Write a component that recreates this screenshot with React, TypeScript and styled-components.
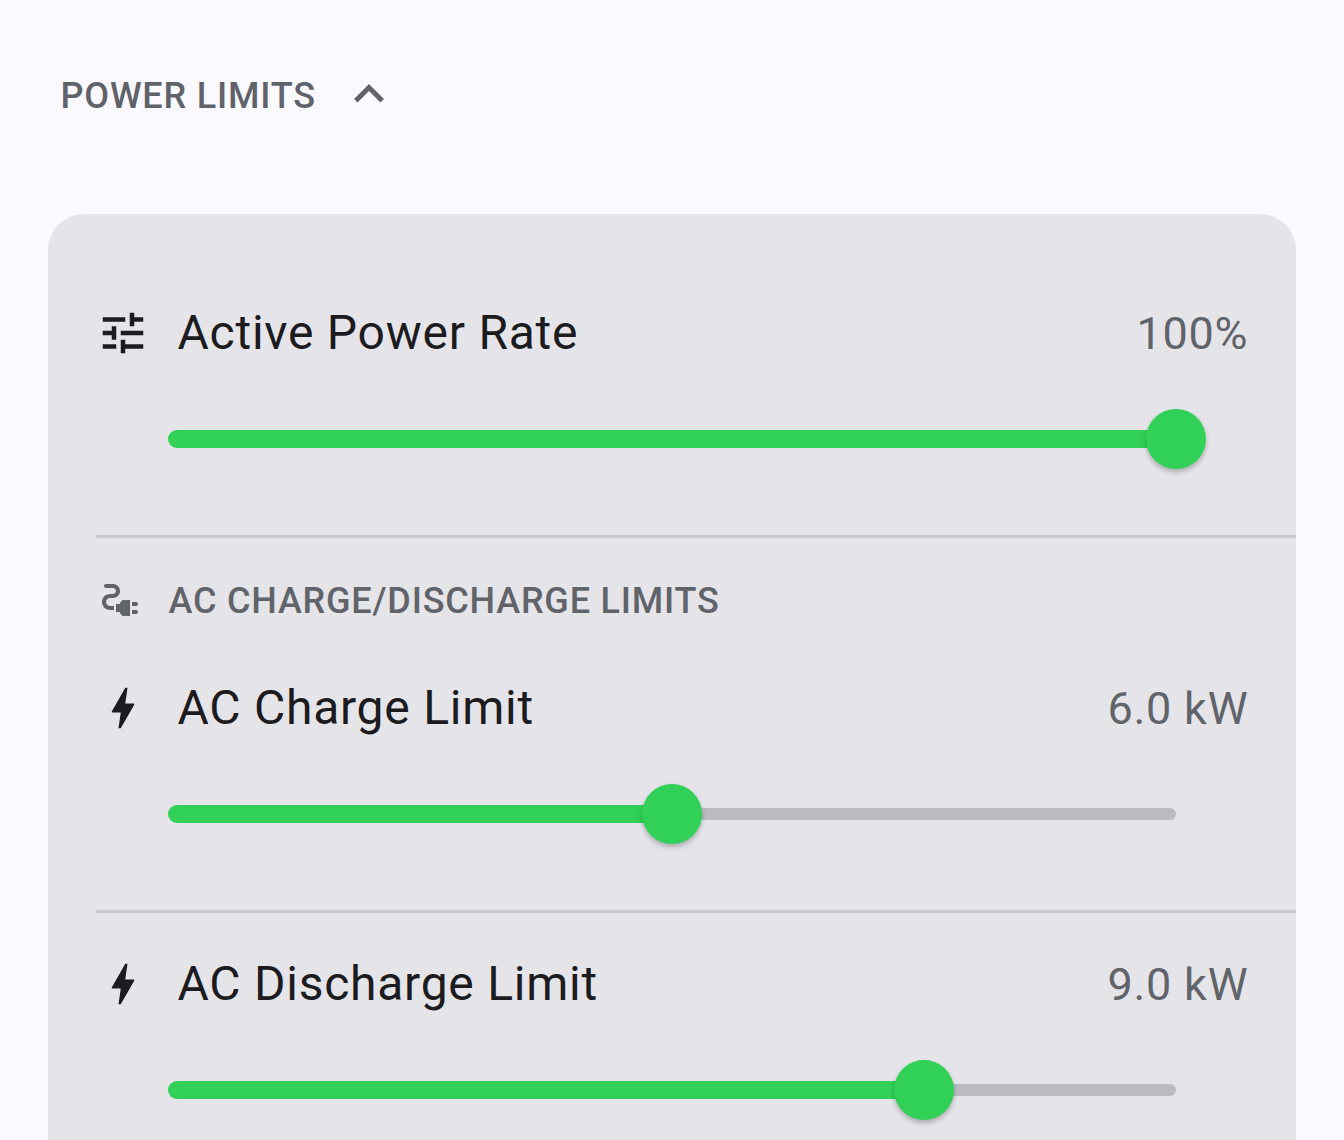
import type { ReactNode } from "react";
import styled, { createGlobalStyle } from "styled-components";

const GlobalStyle = createGlobalStyle`
  * {
    box-sizing: border-box;
  }
  html,
  body {
    margin: 0;
    height: 1140px;
    overflow: hidden;
    background: #faf9ff;
    font-family: Roboto, sans-serif;
  }
`;

const Page = styled.main`
  height: 1140px;
  overflow: hidden;
  padding: 0 48px;
`;

/**
 * collapsible section title
 */
const SectionHeader = styled.header`
  height: 214px;
  padding: 64px 0 0 12.5px;
  display: flex;
  align-items: flex-start;
`;

const SectionTitle = styled.h2`
  margin: 0;
  padding-top: 8px;
  width: 278.5px;
  font-size: 36px;
  line-height: 48px;
  font-weight: 500;
  letter-spacing: 0.8px;
  color: #61636a;
  white-space: nowrap;
`;

const Card = styled.section`
  height: 1000px;
  padding-top: 71px;
  border-radius: 36px 36px 0 0;
  background: #e5e4e9;
`;

const Setting = styled.div<{ $spaced?: boolean }>`
  margin-left: 48px;
  padding-top: ${(p) => (p.$spaced ? 23 : 0)}px;
  padding-bottom: 66px;
  border-bottom: 3px solid #c8c8ce;
`;

const SettingRow = styled.div`
  display: flex;
  align-items: center;
  height: 96px;
  padding-right: 47.700px;
`;

const IconBox = styled.div`
  width: 81.5px;
  svg {
    display: block;
  }
`;

const Label = styled.span`
  flex: 1;
  font-size: 48px;
  line-height: 72px;
  letter-spacing: 0.75px;
  color: #1b1b20;
  white-space: nowrap;
`;

const Value = styled.span`
  padding-top: 1px;
  font-size: 45px;
  line-height: 60px;
  letter-spacing: 0.75px;
  color: #61636a;
  white-space: nowrap;
`;

const Slider = styled.div`
  display: flex;
  align-items: center;
  width: 1038px;
  height: 60px;
  margin: 28px 0 0 72px;
`;

const Filled = styled.div`
  height: 18px;
  border-radius: 9px 0 0 9px;
  background: #31d158;
`;

const Thumb = styled.div`
  flex: none;
  z-index: 1;
  width: 60px;
  height: 60px;
  margin: 0 -30px;
  border-radius: 50%;
  background: #31d158;
  box-shadow: 0 3px 5px rgba(0, 0, 0, 0.25);
`;

const Remaining = styled.div`
  height: 12px;
  border-radius: 0 6px 6px 0;
  background: #b9bbc1;
`;

const GroupTitle = styled.h3`
  display: flex;
  align-items: center;
  height: 122px;
  margin: 0 0 0 48px;
  padding-top: 4px;
  font-size: 36px;
  line-height: 48px;
  font-weight: 500;
  letter-spacing: 0.8px;
  color: #61636a;
  svg {
    display: block;
    margin: -2px 24.5px 0 0;
  }
`;

const ExpandLessIcon = () => (
  <svg width="60" height="60" viewBox="0 0 24 24" fill="#61636a">
    <path d="M12 8l-6 6 1.41 1.41L12 10.83l4.59 4.58L18 14z" />
  </svg>
);

const TuneIcon = () => (
  <svg width="54" height="54" viewBox="0 0 24 24" fill="#1b1b20">
    <path d="M3 17v2h6v-2H3zM3 5v2h10V5H3zm10 16v-2h8v-2h-8v-2h-2v6h2zM7 9v2H3v2h4v2h2V9H7zm14 4v-2H11v2h10zm-6-4h2V7h4V5h-4V3h-2v6z" />
  </svg>
);

const BoltIcon = () => (
  <svg width="54" height="54" viewBox="0 0 24 24" fill="#1b1b20">
    <path d="M11 21h-1l1-7H7.5c-.88 0-.33-.75-.31-.78C8.48 10.94 10.42 7.54 13.01 3h1l-1 7h3.51c.4 0 .62.19.4.66C12.97 17.55 11 21 11 21z" />
  </svg>
);

const PlugIcon = () => (
  <svg width="48" height="48" viewBox="0 0 24 24" fill="#61636a">
    <path d="M21 14c0-.55-.45-1-1-1h-2v2h2c.55 0 1-.45 1-1zm-1 3h-2v2h2c.55 0 1-.45 1-1s-.45-1-1-1zm-8-3h-2v4h2c0 1.1.9 2 2 2h3v-8h-3c-1.1 0-2 .9-2 2z" />
    <path d="M5 13c0-1.1.9-2 2-2h1.5c1.93 0 3.5-1.57 3.5-3.5S10.43 4 8.5 4H5c-.55 0-1 .45-1 1s.45 1 1 1h3.5c.83 0 1.5.67 1.5 1.5S9.33 9 8.5 9H7c-2.21 0-4 1.79-4 4s1.79 4 4 4h2v-2H7c-1.1 0-2-.9-2-2z" />
  </svg>
);

const TRACK_WIDTH = 1008;

type LimitProps = {
  label: string;
  value: string;
  percent: number;
  icon: ReactNode;
  spaced?: boolean;
};

const Limit = ({ label, value, percent, icon, spaced }: LimitProps) => {
  const filled = (TRACK_WIDTH * percent) / 100;

  return (
    <Setting $spaced={spaced}>
      <SettingRow>
        <IconBox>{icon}</IconBox>
        <Label>{label}</Label>
        <Value>{value}</Value>
      </SettingRow>
      <Slider>
        <Filled style={{ width: filled }} />
        <Thumb />
        <Remaining style={{ width: TRACK_WIDTH - filled }} />
      </Slider>
    </Setting>
  );
};

const App = () => (
  <>
    <GlobalStyle />
    <Page>
      <SectionHeader>
        <SectionTitle>POWER LIMITS</SectionTitle>
        <ExpandLessIcon />
      </SectionHeader>
      <Card>
        <Limit
          label="Active Power Rate"
          value="100%"
          percent={100}
          icon={<TuneIcon />}
        />
        <GroupTitle>
          <PlugIcon />
          AC CHARGE/DISCHARGE LIMITS
        </GroupTitle>
        <Limit
          label="AC Charge Limit"
          value="6.0 kW"
          percent={50}
          icon={<BoltIcon />}
        />
        <Limit
          label="AC Discharge Limit"
          value="9.0 kW"
          percent={75}
          icon={<BoltIcon />}
          spaced
        />
      </Card>
    </Page>
  </>
);

export default App;
